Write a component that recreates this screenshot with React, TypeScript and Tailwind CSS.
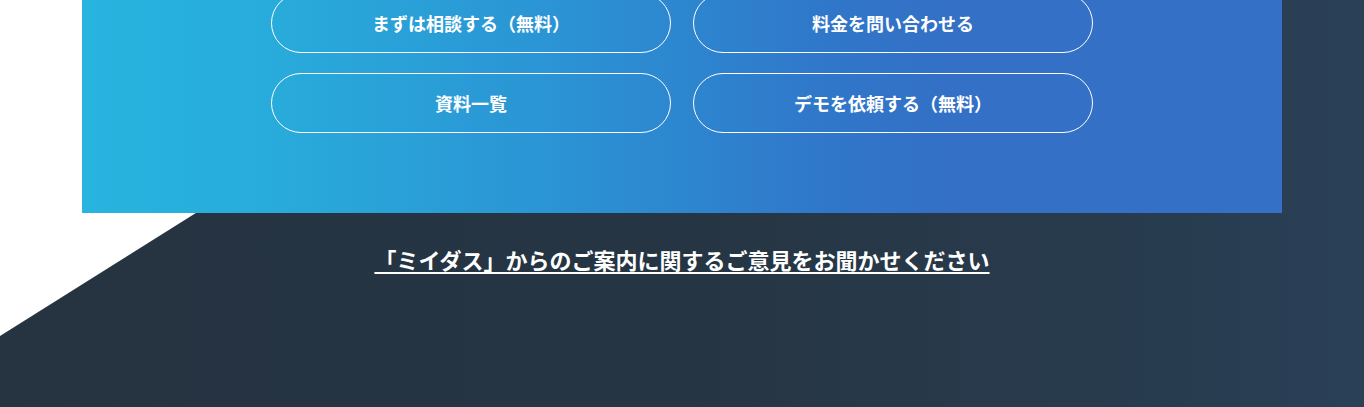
export default function App() {
  const buttons = [
    "まずは相談する（無料）",
    "料金を問い合わせる",
    "資料一覧",
    "デモを依頼する（無料）",
  ];
  return (
    <div
      className="relative h-[407px] w-full overflow-hidden bg-[linear-gradient(90deg,#263442_0%,#263543_50%,#283c4f_85%,#2a4057_100%)]"
      style={{ fontFamily: '"Noto Sans CJK JP", "Noto Sans", sans-serif' }}
    >
      <div className="absolute left-0 top-0 h-[336px] w-[535px] bg-white [clip-path:polygon(0_0,100%_0,0_100%)]" />
      <div className="relative mx-auto flex h-[213px] w-[1200px] flex-col items-center bg-[linear-gradient(90deg,#27b4df_0%,#28acdb_15%,#2b93d4_40%,#3077c9_62%,#3370c6_72%,#3370c6_100%)]">
        <div className="-mt-[7px] grid grid-cols-[400px_400px] gap-x-[22px] gap-y-[20px]">
          {buttons.map((b) => (
            <a
              key={b}
              className="flex h-[60px] items-center justify-center rounded-full border border-white text-[18px] font-bold text-white"
            >
              {b}
            </a>
          ))}
        </div>
      </div>
      <div className="relative mt-[29px] flex justify-center">
        <a className="text-[22px] font-bold leading-[34px] text-white underline decoration-2 underline-offset-[3px]">
          「ミイダス」からのご案内に関するご意見をお聞かせください
        </a>
      </div>
    </div>
  );
}
